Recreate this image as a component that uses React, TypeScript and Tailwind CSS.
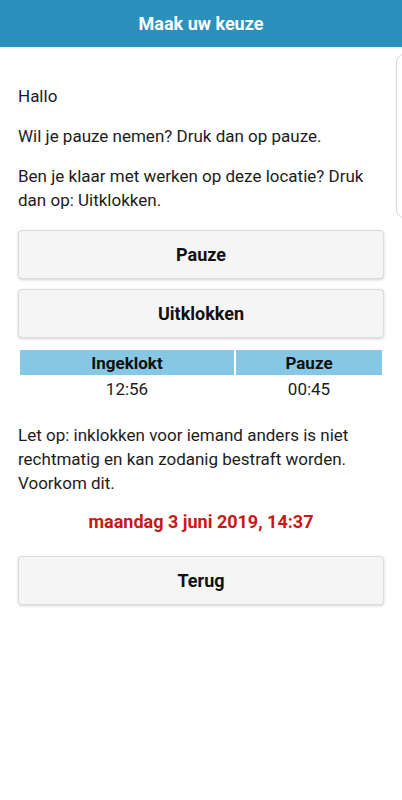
export default function App() {
  const btn =
    "flex h-[49px] w-full items-center justify-center rounded-[4px] border border-[#dcdcdc] bg-[#f5f5f5] text-[18px] font-bold text-[#111] shadow-[0_1px_3px_rgba(0,0,0,0.18)]";

  return (
    <div className="relative min-h-[800px] bg-white font-['Roboto',sans-serif] text-[17px] leading-[24px] text-[#1c1c1c]">
      <header className="flex h-[47px] items-center justify-center bg-[#2b90bd]">
        <h1 className="text-[18px] font-bold text-white">Maak uw keuze</h1>
      </header>

      {/* side drawer tab */}
      <div className="absolute left-[396px] top-[54px] h-[164px] w-[20px] rounded-l-[8px] border border-[#d6d6d6] bg-white" />

      <main className="px-[18px] pt-[37px]">
        <p>Hallo</p>
        <p className="mt-[16px]">Wil je pauze nemen? Druk dan op pauze.</p>
        <p className="mt-[16px]">
          Ben je klaar met werken op deze locatie? Druk dan op: Uitklokken.
        </p>

        <div className="mt-[18px] flex flex-col gap-[10px]">
          <button className={btn}>Pauze</button>
          <button className={btn}>Uitklokken</button>
        </div>

        <table className="mt-[10px] w-full border-separate border-spacing-[2px] text-center">
          <thead>
            <tr>
              <th className="h-[25px] w-[214px] bg-[#86c7e3] p-0 font-bold text-[#111]">Ingeklokt</th>
              <th className="h-[25px] bg-[#86c7e3] p-0 font-bold text-[#111]">Pauze</th>
            </tr>
          </thead>
          <tbody>
            <tr>
              <td className="p-0">12:56</td>
              <td className="p-0">00:45</td>
            </tr>
          </tbody>
        </table>

        <p className="mt-[20px]">
          Let op: inklokken voor iemand anders is niet rechtmatig en kan zodanig bestraft worden. Voorkom dit.
        </p>

        <p className="mt-[15px] text-center text-[18px] font-bold text-[#cc1616]">maandag 3 juni 2019, 14:37</p>

        <div className="mt-[22px]">
          <button className={btn}>Terug</button>
        </div>
      </main>
    </div>
  );
}
